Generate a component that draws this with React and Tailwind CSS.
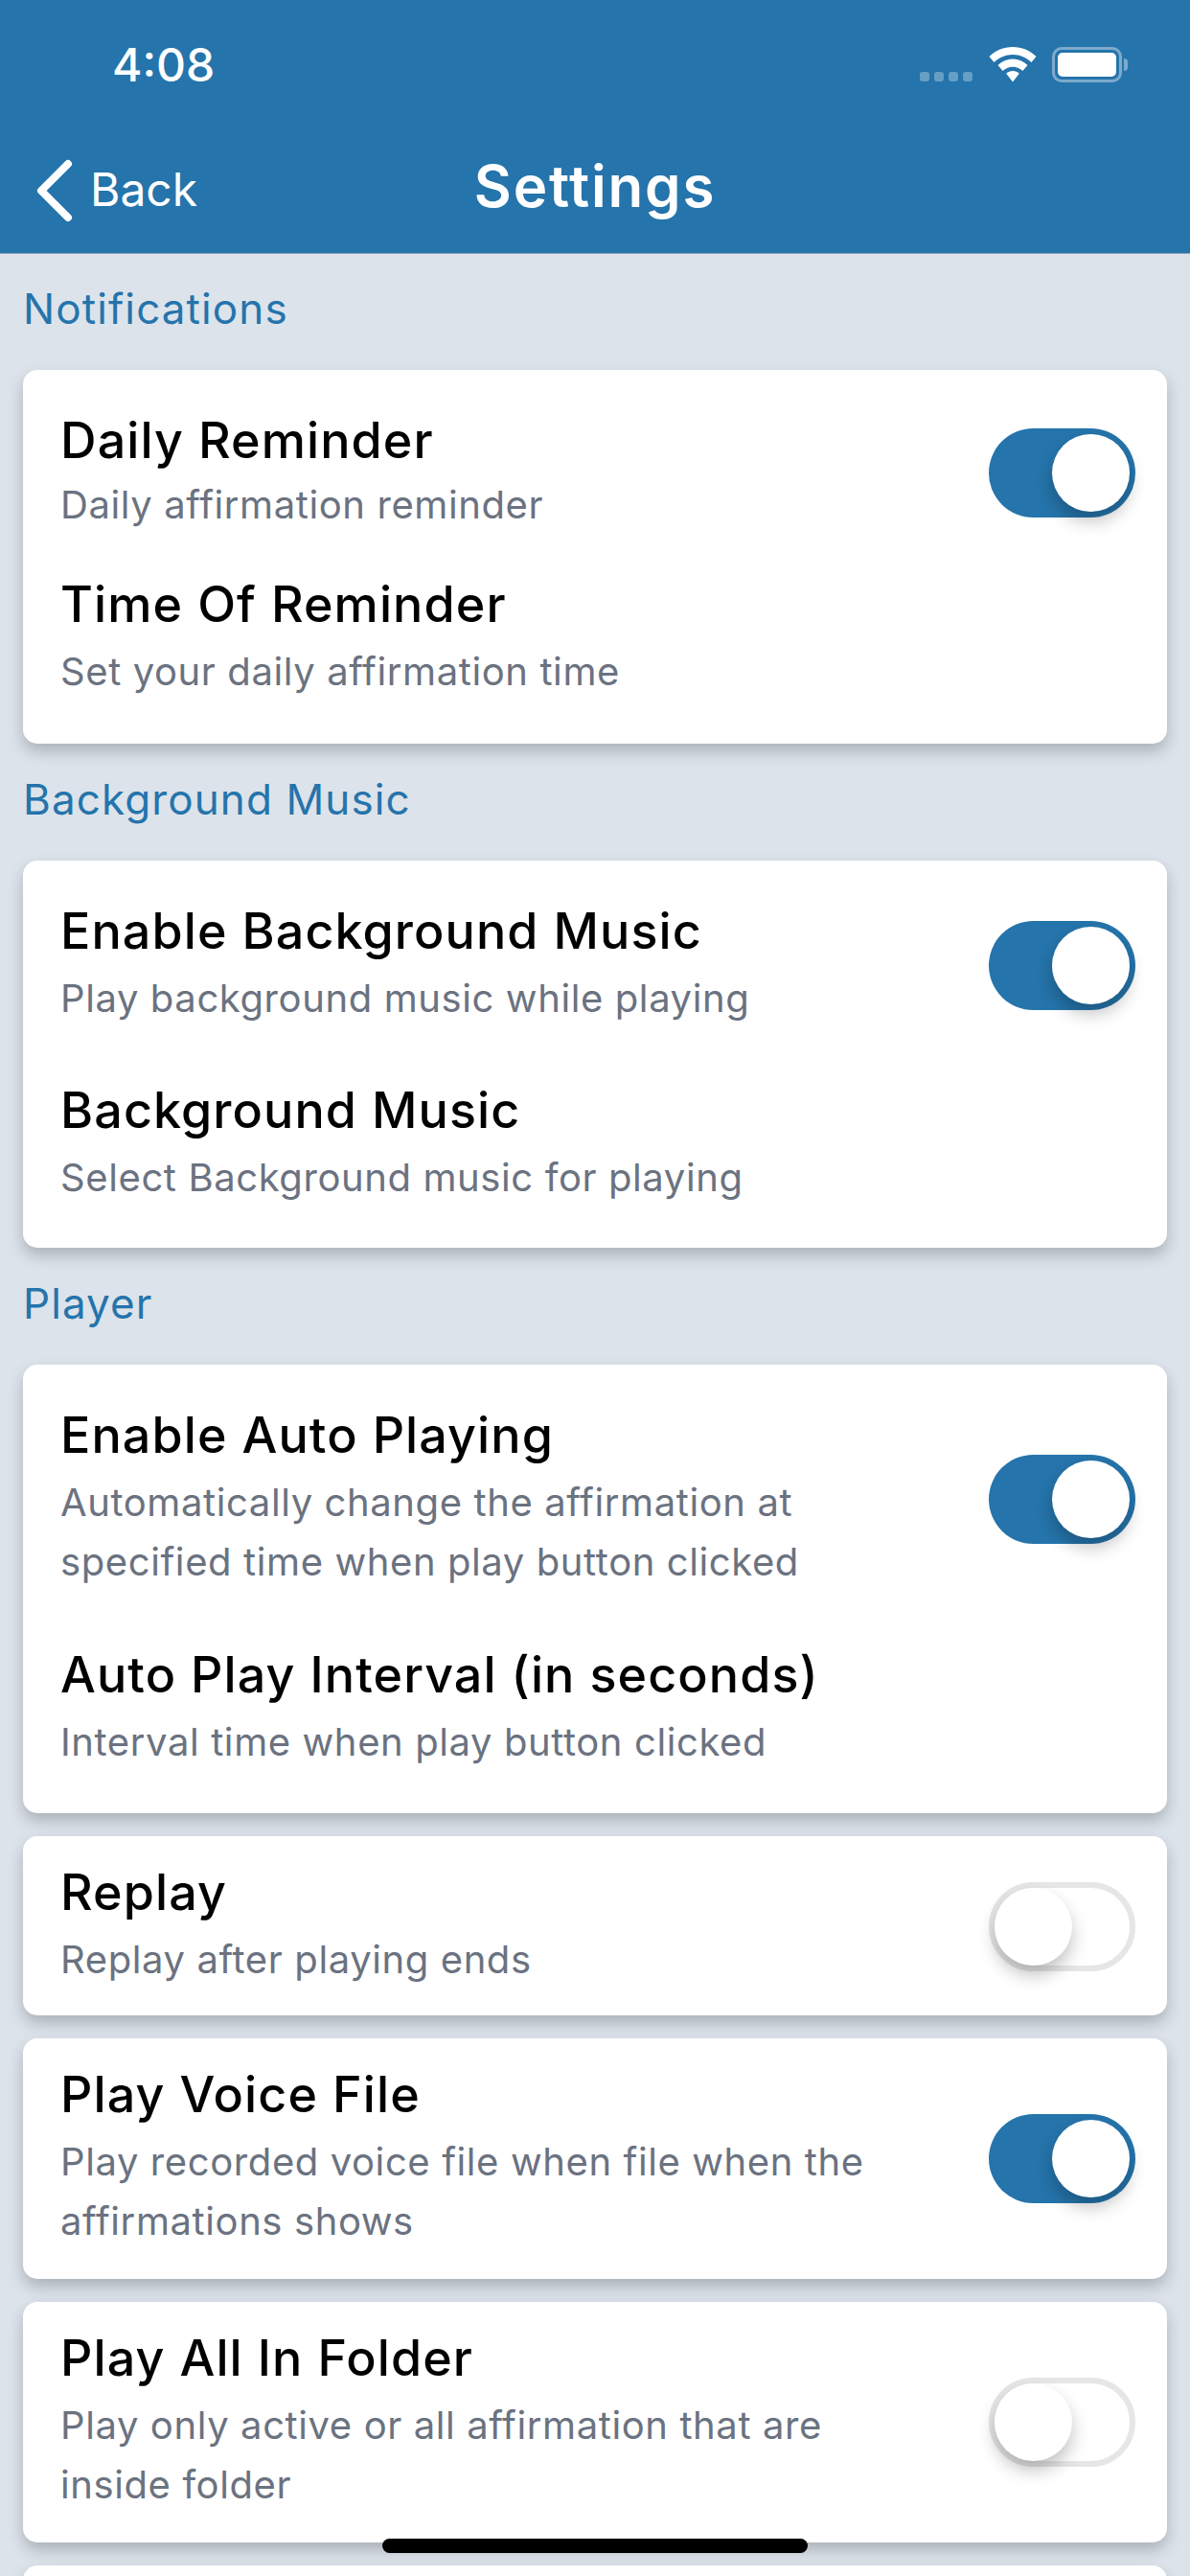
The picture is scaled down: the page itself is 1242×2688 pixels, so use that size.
import React from 'react';

const Toggle = ({ on }) => (
    <div className={`relative w-[153px] h-[93px] shrink-0 rounded-full ${on ? 'bg-[#2574ab]' : 'bg-white border-[6px] border-[#e6e6e6]'}`}>
        <div
            className={`absolute w-[81px] h-[81px] rounded-full bg-white shadow-[0_10px_18px_rgba(0,0,0,0.24)] ${on ? 'left-[66px] top-[6px]' : 'left-0 top-0'}`}
        />
    </div>
);

const Row = ({ title, sub, on, tight }) => (
    <div className="flex items-center justify-between">
        <div>
            <div className="text-[52px] leading-[62px] font-medium tracking-[1.1px] text-black">{title}</div>
            <div className={`text-[40px] leading-[62px] tracking-[0.6px] text-[#6b7280] whitespace-pre-line ${tight ? 'mt-[5px]' : 'mt-[8px]'}`}>{sub}</div>
        </div>
        {on !== undefined && <Toggle on={on} />}
    </div>
);

const Label = ({ children, className }) => (
    <div className={`flex items-center pl-[24px] text-[44px] tracking-[1.1px] text-[#2574ab] ${className}`}>{children}</div>
);

const Card = ({ children, className }) => (
    <div className={`mx-[24px] pl-[39px] pr-[33px] bg-white rounded-[15px] shadow-[0_8px_16px_rgba(0,0,0,0.22)] ${className}`}>
        {children}
    </div>
);

const StatusIcons = () => (
    <div className="absolute left-[960px] top-[49px] flex items-start">
        <div className="flex gap-[5px] mt-[26px]">
            <div className="w-[10px] h-[10px] rounded-[3px] bg-white/30" />
            <div className="w-[10px] h-[10px] rounded-[3px] bg-white/30" />
            <div className="w-[10px] h-[10px] rounded-[3px] bg-white/30" />
            <div className="w-[10px] h-[10px] rounded-[3px] bg-white/30" />
        </div>
        <svg className="ml-[17px]" width="50" height="37" viewBox="0 0 50 37" fill="white">
            <path d="M25 0C15.5 0 7 3.6 0.5 10L5.5 16C10.7 11 17.4 8 25 8S39.3 11 44.5 16L49.5 10C43 3.6 34.5 0 25 0Z" />
            <path d="M25 12.5C19.2 12.5 13.8 14.8 9.5 19L14.6 25C17.4 22.3 21 20.7 25 20.7S32.6 22.3 35.4 25L40.5 19C36.2 14.8 30.8 12.5 25 12.5Z" />
            <path d="M25 25C22.4 25 20 26 18.2 27.8L25 36.5L31.8 27.8C30 26 27.6 25 25 25Z" />
        </svg>
        <div className="ml-[16px] w-[73px] h-[37px] rounded-[10px] border-[3px] border-white/40 p-[3px]">
            <div className="w-full h-full rounded-[5px] bg-white" />
        </div>
        <div className="ml-[2px] mt-[12px] w-[4px] h-[13px] rounded-r-full bg-white/40" />
    </div>
);

export default function App() {
    return (
        <div className="relative h-[2688px] overflow-hidden bg-[#dce3eb] font-['Inter',sans-serif]">
            {/* Header */}
            <div className="relative h-[265px] bg-[#2574ab] border-b border-[#8aa3b8]">
                <div className="absolute left-[117px] top-[40px] text-[48px] leading-[56px] font-medium text-white">4:08</div>
                <StatusIcons />
                <svg className="absolute left-[35px] top-[164px]" width="44" height="70" viewBox="0 0 44 70" fill="none">
                    <path d="M36 7L8 35L36 63" stroke="white" strokeWidth="8" strokeLinecap="round" strokeLinejoin="round" />
                </svg>
                <div className="absolute left-[94px] top-[168px] text-[48px] leading-[60px] text-white">Back</div>
                <div className="absolute left-0 right-0 top-[158px] text-center text-[60px] leading-[72px] font-semibold tracking-[1.8px] text-white">Settings</div>
            </div>

            <Label className="h-[121px] pb-[7px]">Notifications</Label>
            <Card className="pt-[43px] pb-[44px] flex flex-col gap-[42px]">
                <Row title="Daily Reminder" sub="Daily affirmation reminder" on tight />
                <Row title="Time Of Reminder" sub="Set your daily affirmation time" />
            </Card>

            <Label className="h-[122px] pb-[6px]">Background Music</Label>
            <Card className="pt-[43px] pb-[42px] flex flex-col gap-[55px]">
                <Row title="Enable Background Music" sub="Play background music while playing" on />
                <Row title="Background Music" sub="Select Background music for playing" />
            </Card>

            <Label className="h-[122px] pb-[7px]">Player</Label>
            <Card className="pt-[43px] pb-[43px] flex flex-col gap-[56px]">
                <Row title="Enable Auto Playing" sub={'Automatically change the affirmation at\nspecified time when play button clicked'} on />
                <Row title="Auto Play Interval (in seconds)" sub="Interval time when play button clicked" />
            </Card>

            <div className="mt-[24px] flex flex-col gap-[24px]">
                <Card className="pt-[28px] pb-[27px]">
                    <Row title="Replay" sub="Replay after playing ends" on={false} />
                </Card>
                <Card className="pt-[28px] pb-[29px]">
                    <Row title="Play Voice File" sub={'Play recorded voice file when file when the\naffirmations shows'} on />
                </Card>
                <Card className="pt-[28px] pb-[29px]">
                    <Row title="Play All In Folder" sub={'Play only active or all affirmation that are\ninside folder'} on={false} />
                </Card>
                <Card className="h-[200px]" />
            </div>

            {/* Home indicator */}
            <div className="absolute left-[399px] top-[2649px] w-[444px] h-[15px] rounded-full bg-black" />
        </div>
    );
}
